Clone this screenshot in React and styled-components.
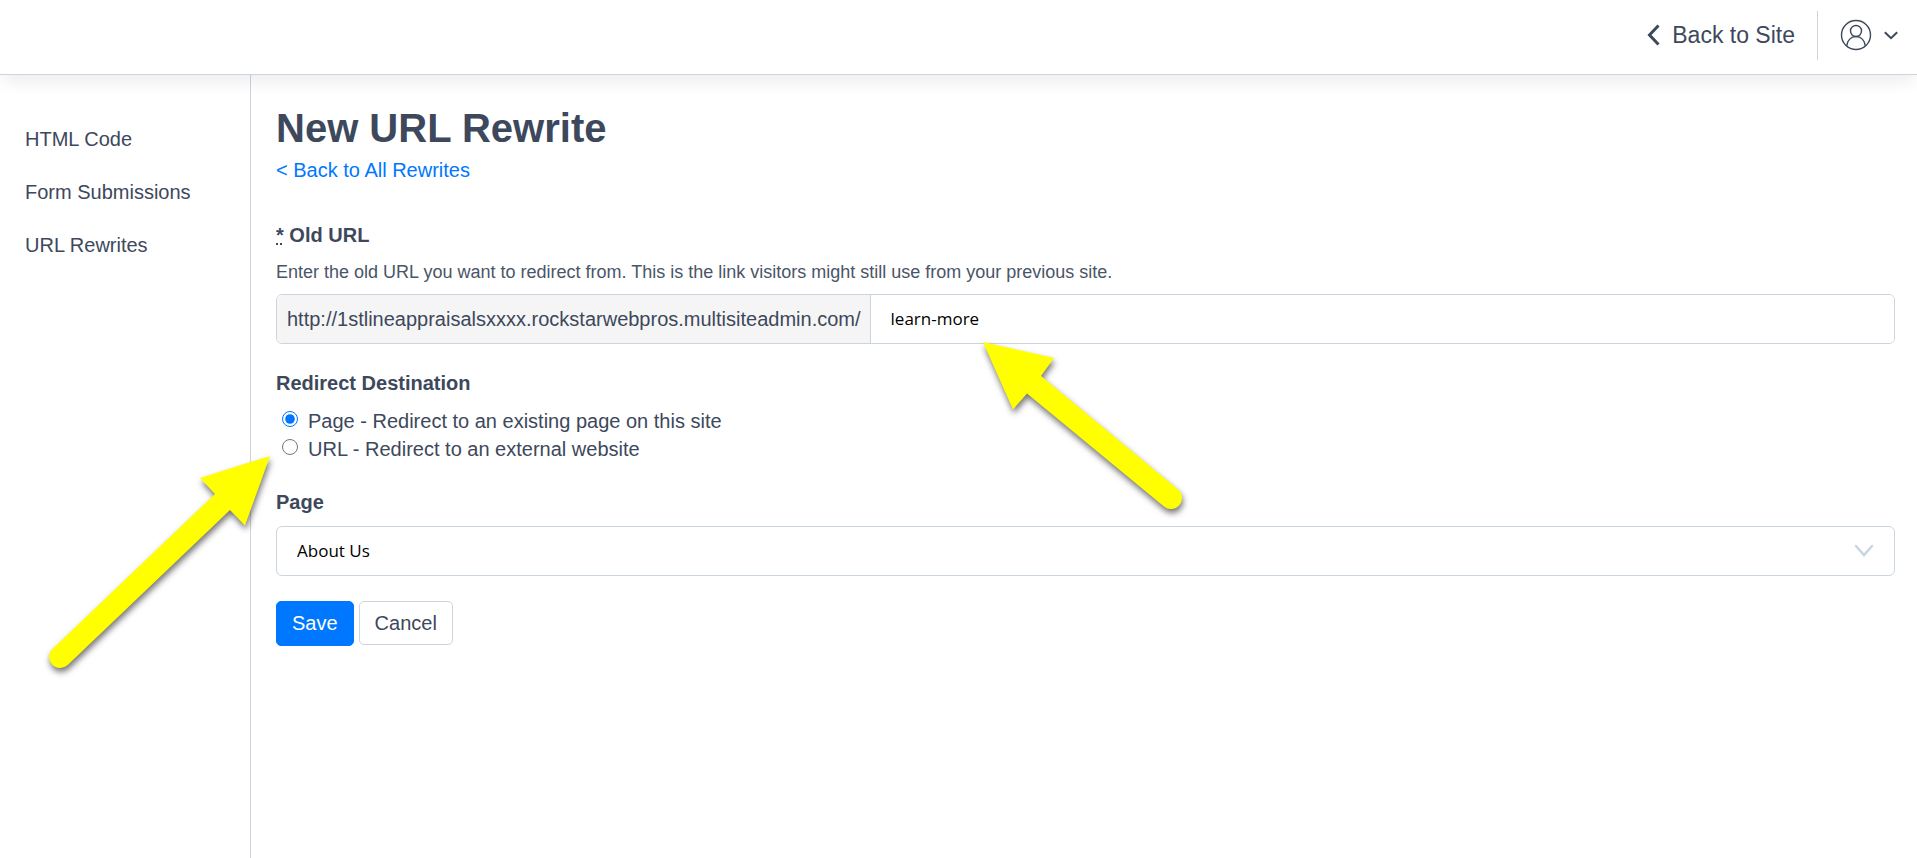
import React, {useState} from 'react';
import styled, {createGlobalStyle} from 'styled-components';

const GlobalStyle = createGlobalStyle`
  *, *::before, *::after {
    box-sizing: border-box;
  }
  body {
    margin: 0;
    background: #fff;
    color: #3d485c;
    font-family: "Liberation Sans", Arial, sans-serif;
    font-size: 20px;
    line-height: 28px;
  }
`;

const Page = styled.div`
  display: flex;
  flex-direction: column;
  min-height: 100vh;
  position: relative;
`;

const Header = styled.header`
  display: flex;
  justify-content: flex-end;
  align-items: center;
  height: 75px;
  padding: 0 19px 4px 0;
  background: #fff;
  border-bottom: 1px solid #cbd5e0;
  box-shadow: 0 10px 15px -3px rgba(0, 0, 0, 0.07);
  z-index: 1;
`;

const SiteLink = styled.a`
  display: flex;
  align-items: center;
  gap: 12px;
  padding-right: 22px;
  color: inherit;
  font-size: 23px;
  text-decoration: none;
`;

const UserMenu = styled.button`
  display: flex;
  align-items: center;
  gap: 12px;
  height: 49px;
  padding: 0 0 0 22px;
  background: none;
  border: 0;
  border-left: 1px solid #cbd5e0;
  color: inherit;
`;

const Body = styled.div`
  display: flex;
  flex: 1;
`;

const Sidebar = styled.nav`
  display: flex;
  flex-direction: column;
  flex: 0 0 251px;
  gap: 25px;
  padding: 50px 25px;
  border-right: 1px solid #cbd5e0;
`;

const SidebarLink = styled.a`
  color: inherit;
  text-decoration: none;
`;

const Main = styled.main`
  flex: 1;
  min-width: 0;
  padding: 25px 22px 25px 25px;
`;

const Title = styled.h1`
  margin: 0;
  font-size: 40px;
  line-height: 56px;
`;

const BackLink = styled.a`
  display: block;
  color: #0077ff;
  text-decoration: none;
`;

const Form = styled.form`
  padding-top: 37px;
`;

const Field = styled.div`
  margin-bottom: 25px;
`;

const RadioField = styled.fieldset`
  margin: 0 0 25px;
  padding: 0;
  border: 0;
`;

const Label = styled.label`
  display: block;
  margin-bottom: 10px;
  font-weight: bold;
`;

const Legend = styled(Label).attrs({as: 'legend'})`
  padding: 0;
`;

const Required = styled.abbr`
  text-decoration: underline dotted;
`;

const Hint = styled.p`
  margin: 0 0 9px;
  color: #4a5568;
  font-size: 18px;
  line-height: 26px;
`;

const InputGroup = styled.div`
  display: flex;
  height: 50px;
  border: 1px solid #cbd5e0;
  border-radius: 6px;
  overflow: hidden;
`;

const Prefix = styled.span`
  display: flex;
  align-items: center;
  padding: 0 9px 0 10px;
  background: #f5f5f5;
  border-right: 1px solid #cbd5e0;
`;

const TextInput = styled.input`
  flex: 1;
  min-width: 0;
  padding: 0 20px 2px;
  border: 0;
  outline: 0;
  background: #fff;
  color: #000;
  font: 17px "Open Sans", sans-serif;
`;

const RadioLabel = styled.label`
  display: flex;
  align-items: center;
  gap: 10px;
`;

const Radio = styled.input`
  width: 16px;
  height: 16px;
  margin: 0 0 4px 6px;
  accent-color: #0075ff;
`;

const SelectWrap = styled.div`
  display: grid;
  align-items: center;
  > * {
    grid-area: 1 / 1;
  }
  svg {
    justify-self: end;
    margin: 0 21px 2px 0;
    pointer-events: none;
  }
`;

const Select = styled.select`
  width: 100%;
  height: 50px;
  padding: 0 20px 2px;
  appearance: none;
  background: #fff;
  border: 1px solid #cbd5e0;
  border-radius: 6px;
  color: #000;
  font: 17px "Open Sans", sans-serif;
`;

const Actions = styled.div`
  display: flex;
  align-items: flex-start;
  gap: 5px;
`;

const Button = styled.button`
  height: ${props => props.$primary ? '45px' : '44px'};
  padding: 0 15px;
  background: ${props => props.$primary ? '#0077ff' : '#fff'};
  border: 1px solid ${props => props.$primary ? '#0077ff' : '#cbd5e0'};
  border-radius: 5px;
  color: ${props => props.$primary ? '#fff' : 'inherit'};
  font-family: inherit;
  font-size: 20px;
`;

// Callout arrows float over the form
const Arrow = styled.svg`
  position: absolute;
  left: ${props => props.$left}px;
  top: ${props => props.$top}px;
  z-index: 2;
  overflow: visible;
  pointer-events: none;
  filter: drop-shadow(1px 4px 3px rgba(0, 0, 0, 0.55));
`;

const LINKS = ['HTML Code', 'Form Submissions', 'URL Rewrites'];

const DESTINATIONS = [
    {value: 'page', text: 'Page - Redirect to an existing page on this site'},
    {value: 'url', text: 'URL - Redirect to an external website'},
];

function App() {
    const [oldUrl, setOldUrl] = useState('learn-more');
    const [destination, setDestination] = useState('page');

    return (
        <Page>
            <GlobalStyle/>
            <Header>
                <SiteLink href="#">
                    <svg width="13" height="22" viewBox="0 0 13 22" fill="none" stroke="currentColor" strokeWidth="3">
                        <path d="M11.5 1.5 2.5 11l9 9.5"/>
                    </svg>
                    Back to Site
                </SiteLink>
                <UserMenu type="button" aria-label="Account">
                    <svg width="32" height="32" viewBox="0 0 32 32" fill="none" stroke="currentColor" strokeWidth="1.4">
                        <circle cx="16" cy="16" r="14.5"/>
                        <circle cx="16" cy="12" r="5.5"/>
                        <path d="M6.8 26.8c.4-5.4 4.2-9.3 9.2-9.3s8.800 3.900 9.200 9.300"/>
                    </svg>
                    <svg width="14" height="9" viewBox="0 0 14 9" fill="none" stroke="currentColor" strokeWidth="2">
                        <path d="m.8 1.200 6.200 6 6.200-6"/>
                    </svg>
                </UserMenu>
            </Header>
            <Body>
                <Sidebar>
                    {LINKS.map(link => <SidebarLink key={link} href="#">{link}</SidebarLink>)}
                </Sidebar>
                <Main>
                    <Title>New URL Rewrite</Title>
                    <BackLink href="#">&lt; Back to All Rewrites</BackLink>
                    <Form onSubmit={e => e.preventDefault()}>
                        <Field>
                            <Label htmlFor="old-url"><Required>*</Required> Old URL</Label>
                            <Hint>Enter the old URL you want to redirect from. This is the link visitors might still use from your previous site.</Hint>
                            <InputGroup>
                                <Prefix>http://1stlineappraisalsxxxx.rockstarwebpros.multisiteadmin.com/</Prefix>
                                <TextInput id="old-url" value={oldUrl} onChange={e => setOldUrl(e.target.value)}/>
                            </InputGroup>
                        </Field>
                        <RadioField>
                            <Legend>Redirect Destination</Legend>
                            {DESTINATIONS.map(({value, text}) => (
                                <RadioLabel key={value}>
                                    <Radio
                                        type="radio"
                                        name="destination"
                                        checked={destination === value}
                                        onChange={() => setDestination(value)}
                                    />
                                    {text}
                                </RadioLabel>
                            ))}
                        </RadioField>
                        <Field>
                            <Label htmlFor="page">Page</Label>
                            <SelectWrap>
                                <Select id="page">
                                    <option>About Us</option>
                                </Select>
                                <svg width="20" height="13" viewBox="0 0 20 13" fill="none" stroke="#cbd5e0" strokeWidth="2.5" strokeLinecap="round">
                                    <path d="m2 2 8 9 8-9"/>
                                </svg>
                            </SelectWrap>
                        </Field>
                        <Actions>
                            <Button $primary>Save</Button>
                            <Button type="button">Cancel</Button>
                        </Actions>
                    </Form>
                </Main>
            </Body>
            <Arrow $left={983} $top={342} width="200" height="168" fill="#ff0">
                <path d="M0 0 71 16 58 34 195 147.5A11 11 0 0 1 181 164.5L44 51.5 30 67.5Z"/>
            </Arrow>
            <Arrow $left={49} $top={456} width="221" height="213" fill="#ff0">
                <path d="M221 0 151 22 166 38 3.5 193A11 11 0 0 0 18.7 209L181 54 196 69.5Z"/>
            </Arrow>
        </Page>
    );
}

export default App;
